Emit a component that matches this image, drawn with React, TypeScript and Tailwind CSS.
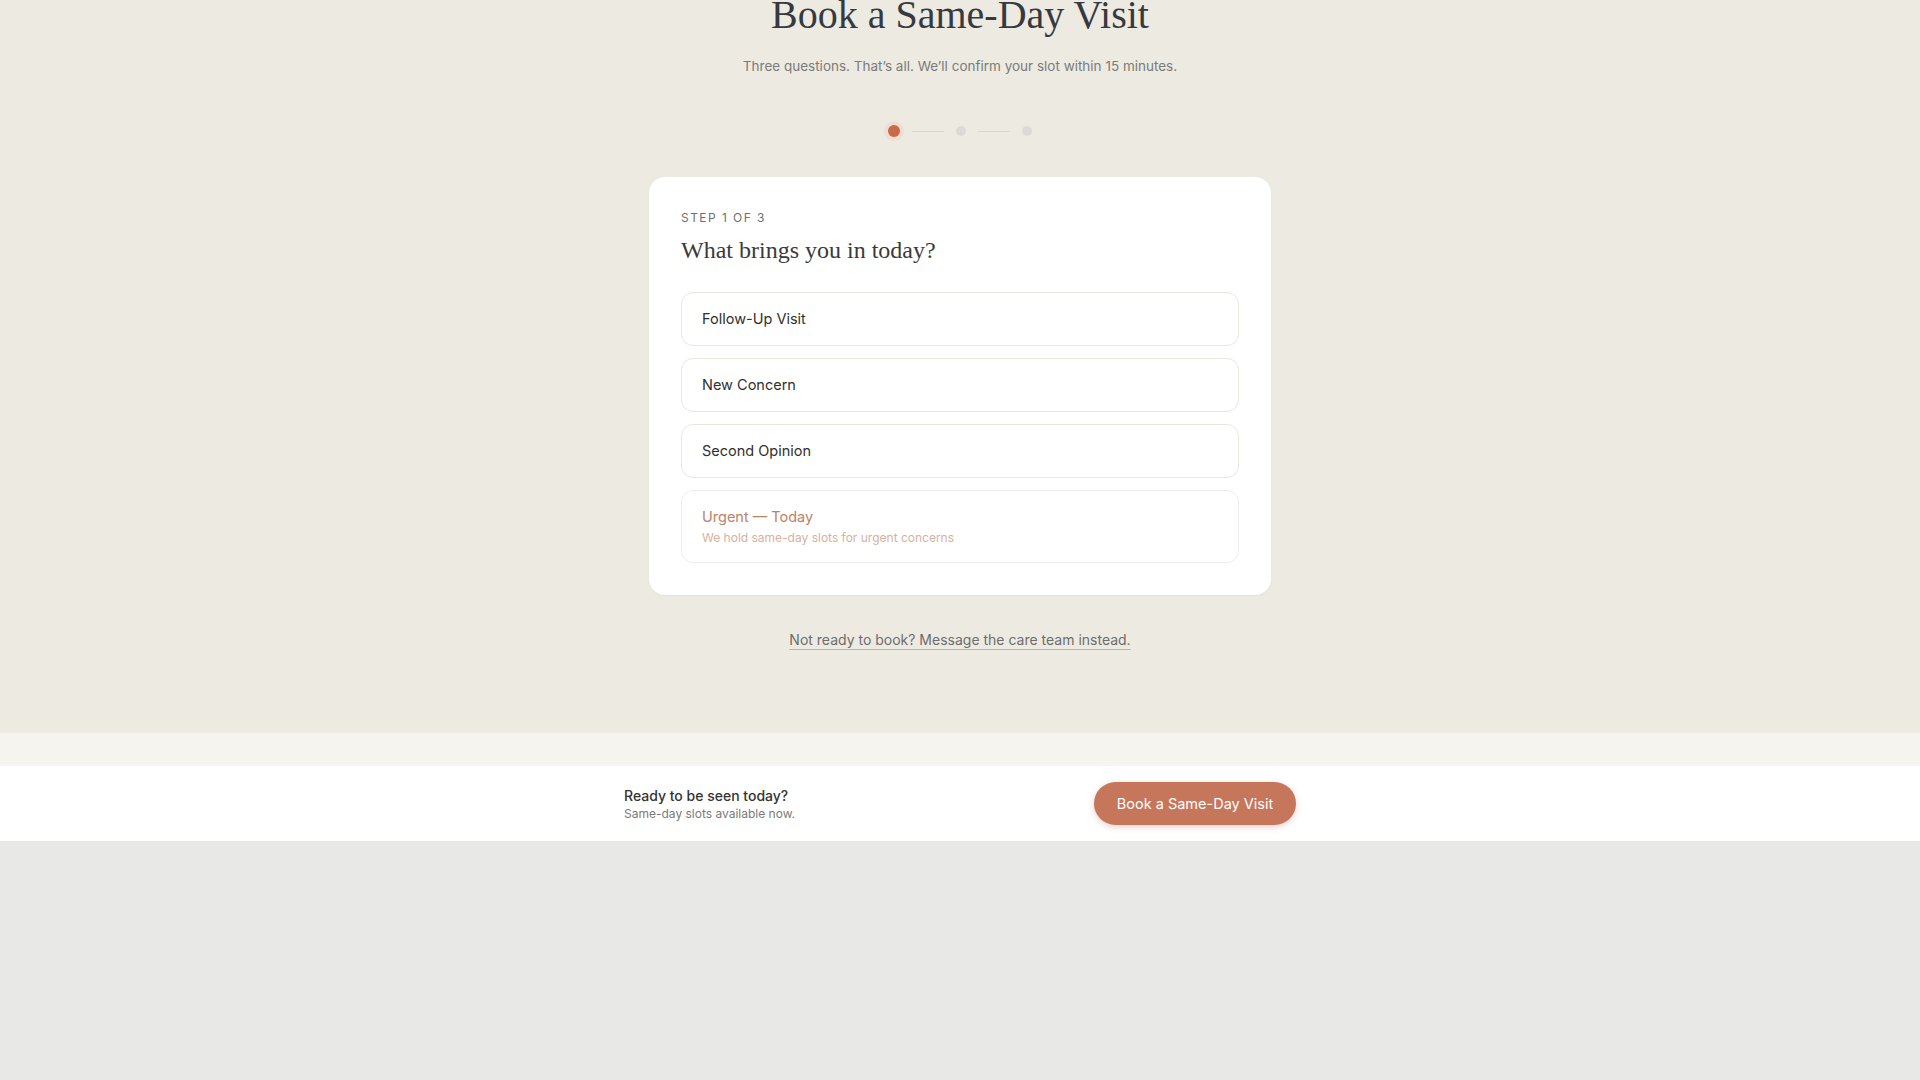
import React from "react";

const sans = { fontFamily: "Inter, 'Noto Sans', 'Liberation Sans', sans-serif" } as const;
const serif = { fontFamily: "'Liberation Serif', 'DejaVu Serif', serif" } as const;

function Option({ label }: { label: string }) {
  return (
    <button className="w-full text-left rounded-xl border border-[#e9e7e2] bg-white px-5 py-4 text-[14.5px] leading-5 text-[#2f2f2f]">
      {label}
    </button>
  );
}

export default function App() {
  return (
    <div className="min-h-screen bg-[#e8e8e7]" style={sans}>
      <section className="bg-[#edeae2] flex flex-col items-center pb-[81px]">
        <h1
          className="mt-[-9px] text-[40px] leading-[48px] text-[#363a40] font-normal"
          style={serif}
        >
          Book a Same-Day Visit
        </h1>
        <p className="mt-[15px] text-[13.5px] leading-6 text-[#7b7b7b]">
          Three questions. That’s all. We’ll confirm your slot within 15 minutes.
        </p>
        <div className="mt-[47px] flex items-center gap-3">
          <span className="w-3 h-3 rounded-full bg-[#c76b4b] ring-4 ring-[#f2ddd2]" />
          <span className="w-8 h-px bg-[#dad7d0]" />
          <span className="w-2.5 h-2.5 rounded-full bg-[#dcdad5]" />
          <span className="w-8 h-px bg-[#dad7d0]" />
          <span className="w-2.5 h-2.5 rounded-full bg-[#dcdad5]" />
        </div>
        <div className="mt-10 w-[622px] rounded-2xl bg-white px-8 pt-[33px] pb-8 shadow-[0_1px_2px_rgba(0,0,0,0.03)]">
          <div className="text-[12px] leading-4 tracking-[0.12em] text-[#6f6f6f]">STEP 1 OF 3</div>
          <h2 className="mt-[8px] text-[24px] leading-8 text-[#3a3a3a] font-normal" style={serif}>
            What brings you in today?
          </h2>
          <div className="mt-[26px] flex flex-col gap-3">
            <Option label="Follow-Up Visit" />
            <Option label="New Concern" />
            <Option label="Second Opinion" />
            <button className="w-full text-left rounded-xl border border-[#efede9] bg-white px-5 py-4">
              <div className="text-[14.5px] leading-5 text-[#bf8167]">Urgent — Today</div>
              <div className="mt-[2px] text-[12px] leading-[17px] text-[#d8b1a0]">
                We hold same-day slots for urgent concerns
              </div>
            </button>
          </div>
        </div>
        <a
          href="#"
          className="mt-[33px] text-[14px] leading-6 text-[#6d6d6d] underline decoration-[#b9b5ae] underline-offset-4"
        >
          Not ready to book? Message the care team instead.
        </a>
      </section>
      <div className="h-[33px] bg-[#f6f4ef]" />
      <div className="h-[75px] bg-white flex justify-center">
        <div className="w-[672px] flex items-center justify-between">
          <div>
            <div className="text-[14px] leading-5 text-[#333333] font-medium">Ready to be seen today?</div>
            <div className="text-[12px] leading-4 text-[#7a7a7a]">Same-day slots available now.</div>
          </div>
          <button className="h-[43px] w-[202px] rounded-full bg-[#c6765b] text-white text-[14.5px] shadow-[0_2px_6px_rgba(160,80,50,0.25)]">
            Book a Same-Day Visit
          </button>
        </div>
      </div>
    </div>
  );
}
